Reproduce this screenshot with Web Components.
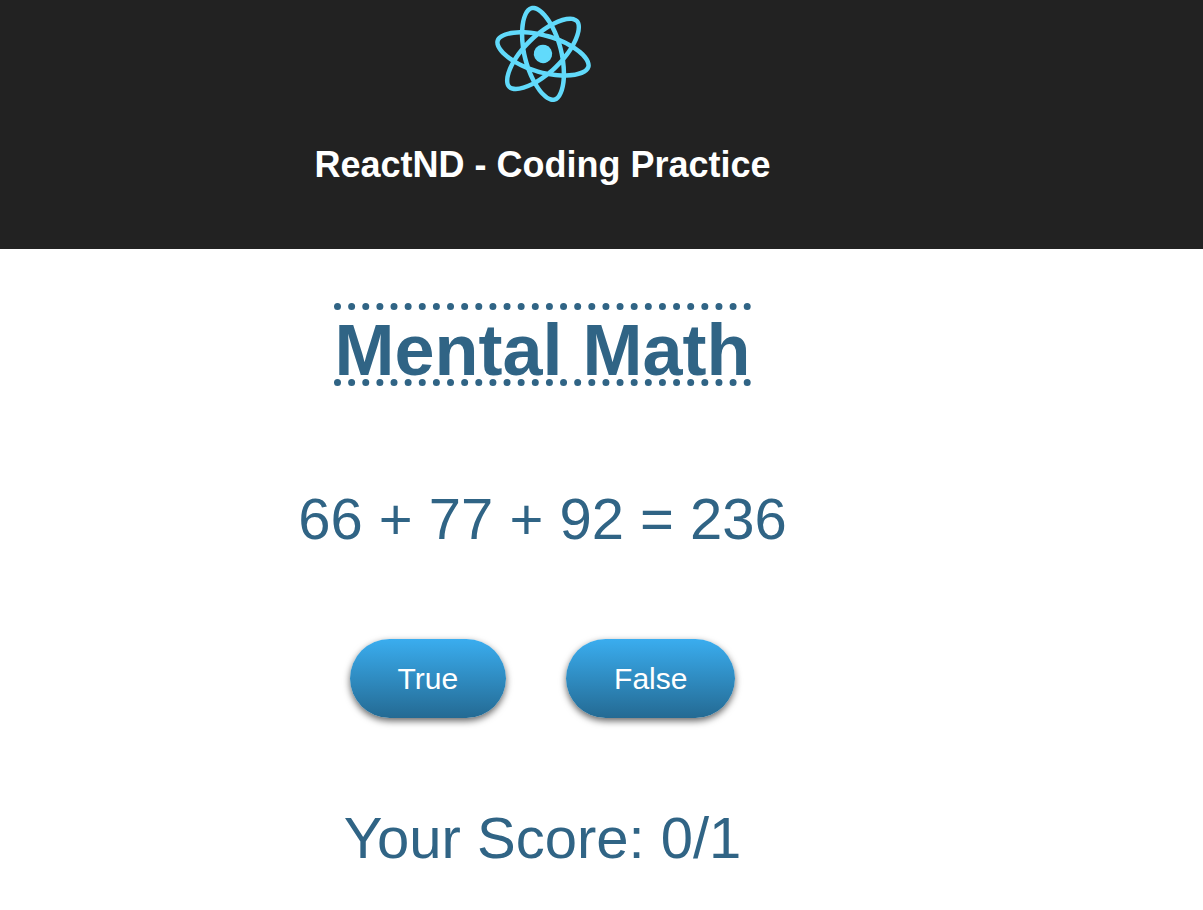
<!DOCTYPE html>
<html lang="en">
<head>
<meta charset="utf-8">
<meta name="viewport" content="width=device-width, initial-scale=1">
<title>ReactND - Coding Practice</title>
<style>
  body { margin: 0; background: #fff; font-family: "Liberation Sans", Arial, sans-serif; }
</style>
</head>
<body>
<math-app></math-app>

<template id="logo-template">
  <style>
    :host { display: block; width: 108px; height: 108px; }
    svg { display: block; width: 100%; height: 100%; }
  </style>
  <svg viewBox="153 29 536 536" role="img" aria-label="logo">
    <g fill="#61dafb" transform="rotate(16 420.9 296.5)">
      <path d="M666.3 296.5c0-32.5-40.7-63.3-103.1-82.4 14.4-63.6 8-114.2-20.2-130.4-6.5-3.8-14.1-5.6-22.4-5.6v22.3c4.6 0 8.3.9 11.4 2.6 13.6 7.8 19.5 37.5 14.9 75.7-1.1 9.4-2.9 19.3-5.1 29.4-19.6-4.8-41-8.5-63.5-10.9-13.5-18.5-27.5-35.3-41.6-50 32.6-30.3 63.2-46.9 84-46.9V78c-27.5 0-63.5 19.6-99.9 53.6-36.4-33.8-72.4-53.2-99.9-53.2v22.3c20.7 0 51.4 16.5 84 46.6-14 14.7-28 31.4-41.3 49.9-22.6 2.4-44 6.1-63.6 11-2.3-10-4-19.7-5.2-29-4.7-38.2 1.1-67.9 14.6-75.8 3-1.8 6.9-2.6 11.5-2.6V78.5c-8.4 0-16 1.8-22.6 5.6-28.1 16.2-34.4 66.7-19.9 130.1-62.2 19.2-102.7 49.9-102.7 82.3 0 32.5 40.7 63.3 103.1 82.4-14.4 63.6-8 114.2 20.2 130.4 6.5 3.8 14.1 5.6 22.5 5.6 27.5 0 63.5-19.6 99.9-53.6 36.4 33.8 72.4 53.2 99.9 53.2 8.4 0 16-1.8 22.6-5.6 28.1-16.2 34.4-66.7 19.9-130.1 62-19.1 102.5-49.9 102.5-82.3zm-130.2-66.7c-3.7 12.9-8.3 26.2-13.5 39.5-4.1-8-8.4-16-13.1-24-4.6-8-9.5-15.8-14.4-23.4 14.2 2.1 27.9 4.7 41 7.9zm-45.8 106.5c-7.8 13.5-15.8 26.3-24.1 38.2-14.9 1.3-30 2-45.2 2-15.1 0-30.2-.7-45-1.9-8.3-11.9-16.4-24.6-24.2-38-7.6-13.1-14.5-26.4-20.8-39.8 6.2-13.4 13.2-26.8 20.7-39.9 7.8-13.5 15.8-26.3 24.1-38.2 14.9-1.3 30-2 45.2-2 15.1 0 30.2.7 45 1.9 8.3 11.9 16.4 24.6 24.2 38 7.6 13.1 14.5 26.4 20.8 39.8-6.3 13.4-13.2 26.8-20.7 39.9zm32.3-13c5.4 13.4 10 26.8 13.8 39.8-13.1 3.2-26.9 5.9-41.2 8 4.9-7.7 9.8-15.6 14.4-23.7 4.6-8 8.9-16.1 13-24.1zM421.2 430c-9.3-9.6-18.6-20.3-27.8-32 9 .4 18.2.7 27.5.7 9.4 0 18.7-.2 27.8-.7-9 11.7-18.3 22.4-27.5 32zm-74.4-58.9c-14.2-2.1-27.9-4.7-41-7.9 3.7-12.9 8.3-26.2 13.5-39.5 4.1 8 8.4 16 13.1 24 4.7 8 9.5 15.8 14.4 23.4zM420.7 163c9.3 9.6 18.6 20.3 27.8 32-9-.4-18.2-.7-27.5-.7-9.4 0-18.7.2-27.8.7 9-11.7 18.3-22.4 27.5-32zm-74 58.9c-4.9 7.7-9.8 15.6-14.4 23.7-4.6 8-8.9 16-13 24-5.4-13.4-10-26.8-13.8-39.8 13.1-3.1 26.9-5.8 41.2-7.9zm-90.5 125.2c-35.4-15.1-58.3-34.9-58.3-50.6 0-15.7 22.9-35.6 58.3-50.6 8.6-3.7 18-7 27.7-10.1 5.7 19.6 13.2 40 22.5 60.9-9.2 20.8-16.6 41.1-22.2 60.6-9.9-3.1-19.3-6.5-28-10.2zM310 490c-13.6-7.8-19.5-37.5-14.9-75.7 1.1-9.4 2.9-19.3 5.1-29.4 19.6 4.8 41 8.5 63.5 10.9 13.5 18.5 27.5 35.3 41.6 50-32.6 30.3-63.2 46.9-84 46.9-4.5-.1-8.3-1-11.3-2.7zm237.2-76.2c4.7 38.2-1.1 67.9-14.6 75.8-3 1.8-6.9 2.6-11.5 2.6-20.7 0-51.4-16.5-84-46.6 14-14.7 28-31.4 41.3-49.9 22.6-2.4 44-6.1 63.6-11 2.3 10.1 4.1 19.8 5.2 29.1zm38.5-66.7c-8.6 3.7-18 7-27.7 10.1-5.7-19.6-13.2-40-22.5-60.9 9.2-20.8 16.6-41.1 22.2-60.6 9.9 3.1 19.3 6.5 28.1 10.2 35.4 15.1 58.3 34.9 58.3 50.6-.1 15.7-23 35.6-58.4 50.6z"/>
      <circle cx="420.9" cy="296.5" r="45.7"/>
    </g>
  </svg>
</template>

<template id="header-template">
  <style>
    :host { display: block; background: #222; color: #fff; }
    header {
      display: flex; flex-direction: column; align-items: center; gap: 36px;
      padding: 0 var(--gutter) 63px 0;
    }
    h1 { margin: 0; font-size: 36px; line-height: 42px; text-align: center; }
  </style>
  <header>
    <react-logo></react-logo>
    <h1><slot></slot></h1>
  </header>
</template>

<template id="button-template">
  <style>
    :host { display: block; }
    button {
      display: block; margin: 0; padding: 22px 48px;
      border: 0; border-radius: 40px;
      background: linear-gradient(#3aadef, #246a93);
      box-shadow: 0 3px 7px rgba(0, 0, 0, .6);
      color: #fff; font-family: inherit; font-size: 30px; line-height: 35px;
      cursor: pointer;
    }
  </style>
  <button type="button"><slot></slot></button>
</template>

<template id="game-template">
  <style>
    :host { display: block; color: #306485; }
    main {
      display: flex; flex-direction: column; align-items: center; gap: 87px;
      padding: 54px var(--gutter) 36px 0;
      text-align: center;
    }
    h2 {
      margin: 0 0 13px; padding-top: 11px;
      border: 0 dotted currentColor; border-width: 7px 0;
      font-size: 72px; line-height: 58px;
    }
    p { margin: 0; font-size: 58px; line-height: 66px; }
    .answers { display: flex; gap: 60px; }
  </style>
  <main>
    <h2>Mental Math</h2>
    <p class="equation"></p>
    <div class="answers">
      <answer-button data-answer="true">True</answer-button>
      <answer-button data-answer="false">False</answer-button>
    </div>
    <p class="score"></p>
  </main>
</template>

<template id="app-template">
  <style>
    :host { display: block; --gutter: 118px; }
  </style>
  <app-header>ReactND - Coding Practice</app-header>
  <math-game></math-game>
</template>

<script>
  class TemplateElement extends HTMLElement {
    constructor() {
      super();
      const template = document.getElementById(this.constructor.template);
      this.attachShadow({ mode: "open" }).append(template.content.cloneNode(true));
    }
  }

  class ReactLogo extends TemplateElement { static template = "logo-template"; }
  class AppHeader extends TemplateElement { static template = "header-template"; }
  class AnswerButton extends TemplateElement { static template = "button-template"; }

  class MathGame extends TemplateElement {
    static template = "game-template";

    constructor() {
      super();
      this.terms = [66, 77, 92];
      this.proposed = 236;
      this.correct = 0;
      this.played = 1;
      this.shadowRoot.querySelector(".answers").addEventListener("click", (event) => {
        const button = event.target.closest("answer-button");
        if (button) this.answer(button.dataset.answer === "true");
      });
      this.render();
    }

    answer(value) {
      const sum = this.terms.reduce((a, b) => a + b, 0);
      if ((sum === this.proposed) === value) this.correct++;
      this.played++;
      this.terms = this.terms.map(() => Math.floor(Math.random() * 100));
      this.proposed = Math.floor(Math.random() * 3) + this.terms.reduce((a, b) => a + b, 0);
      this.render();
    }

    render() {
      this.shadowRoot.querySelector(".equation").textContent = `${this.terms.join(" + ")} = ${this.proposed}`;
      this.shadowRoot.querySelector(".score").textContent = `Your Score: ${this.correct}/${this.played}`;
    }
  }

  class MathApp extends TemplateElement { static template = "app-template"; }

  customElements.define("react-logo", ReactLogo);
  customElements.define("app-header", AppHeader);
  customElements.define("answer-button", AnswerButton);
  customElements.define("math-game", MathGame);
  customElements.define("math-app", MathApp);
</script>
</body>
</html>
